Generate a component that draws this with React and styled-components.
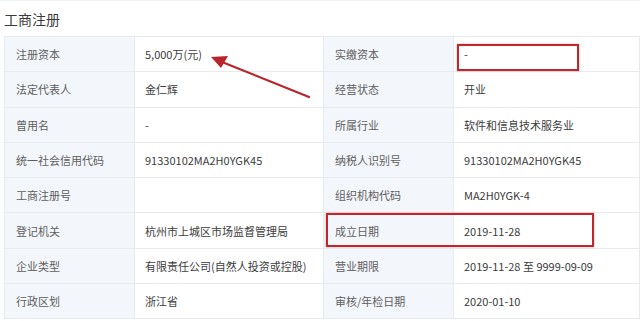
import React from 'react';
import styled, { createGlobalStyle } from 'styled-components';

const GlobalStyle = createGlobalStyle`
  body {
    margin: 0;
    background: #fff;
    font-family: "Noto Sans CJK SC", "Noto Sans", sans-serif;
  }
`;

const Page = styled.div`
  position: relative;
  width: 640px;
  height: 321px;
  overflow: hidden;
  border-top: 1px solid #f1f2f4;
  box-sizing: border-box;
`;

const Title = styled.div`
  height: 35px;
  padding-left: 4px;
  display: flex;
  align-items: center;
  font-size: 14px;
  color: #3a3a3a;
`;

const Table = styled.div`
  display: grid;
  grid-template-columns: 130px 189px 130px 1fr;
  grid-auto-rows: 35.3px;
  margin-left: 4px;
  border-top: 1px solid #e7ebf0;
  border-left: 1px solid #e7ebf0;
`;

const Cell = styled.div`
  display: flex;
  align-items: center;
  padding-left: ${p => (p.$label ? '11px' : '10px')};
  font-size: 11px;
  color: ${p => (p.$label ? '#5e5e5e' : '#3c3c3c')};
  background: ${p => (p.$label ? '#f3f6fb' : '#fff')};
  border-right: 1px solid #e7ebf0;
  border-bottom: 1px solid #e7ebf0;
  white-space: nowrap;
`;

const RedBox = styled.div`
  position: absolute;
  border: 2px solid #c0272d;
  box-shadow: 0 0 2px rgba(192, 39, 45, 0.4);
  box-sizing: border-box;
`;

const Arrow = styled.svg`
  position: absolute;
  left: 0;
  top: 0;
`;

const rows = [
  ['注册资本', '5,000万(元)', '实缴资本', '-'],
  ['法定代表人', '金仁辉', '经营状态', '开业'],
  ['曾用名', '-', '所属行业', '软件和信息技术服务业'],
  ['统一社会信用代码', '91330102MA2H0YGK45', '纳税人识别号', '91330102MA2H0YGK45'],
  ['工商注册号', '', '组织机构代码', 'MA2H0YGK-4'],
  ['登记机关', '杭州市上城区市场监督管理局', '成立日期', '2019-11-28'],
  ['企业类型', '有限责任公司(自然人投资或控股)', '营业期限', '2019-11-28 至 9999-09-09'],
  ['行政区划', '浙江省', '审核/年检日期', '2020-01-10'],
];

export default function App() {
  return (
    <Page>
      <GlobalStyle />
      <Title>工商注册</Title>
      <Table>
        {rows.map((r, i) => (
          <React.Fragment key={i}>
            <Cell $label>{r[0]}</Cell>
            <Cell>{r[1]}</Cell>
            <Cell $label>{r[2]}</Cell>
            <Cell>{r[3]}</Cell>
          </React.Fragment>
        ))}
      </Table>
      <RedBox style={{ left: 457, top: 43, width: 122, height: 27 }} />
      <RedBox style={{ left: 326, top: 212, width: 268, height: 34 }} />
      <Arrow width="640" height="321">
        <line x1="309" y1="96" x2="222" y2="61" stroke="#b8262b" strokeWidth="2.2" strokeLinecap="round" />
        <polygon points="211,56 228,55 221,67" fill="#b8262b" />
      </Arrow>
    </Page>
  );
}
